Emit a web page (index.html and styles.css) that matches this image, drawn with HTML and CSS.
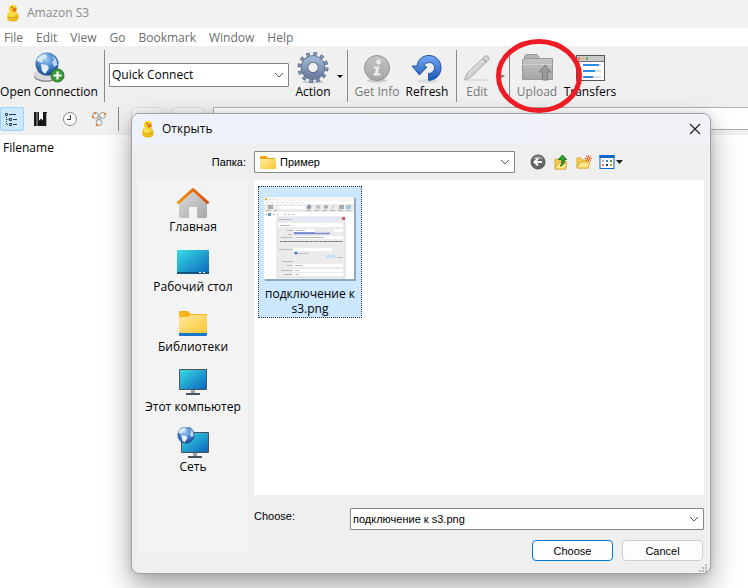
FILE: index.html
```html
<!DOCTYPE html>
<html lang="ru">
<head>
<meta charset="utf-8">
<title>Amazon S3</title>
<link rel="stylesheet" href="styles.css">
</head>
<body>
<svg class="defs" width="0" height="0" aria-hidden="true">
  <defs>
    <linearGradient id="screen" x1="0" y1="0" x2="1" y2="1"><stop offset="0" stop-color="#39dbe3"/><stop offset="1" stop-color="#0a66bd"/></linearGradient>
    <linearGradient id="folder-fill" x1="0" y1="0" x2="1" y2="1"><stop offset="0" stop-color="#ffe9a0"/><stop offset="1" stop-color="#fcc630"/></linearGradient>
    <radialGradient id="globe" cx=".45" cy=".3" r=".7"><stop offset="0" stop-color="#a8d0f4"/><stop offset=".5" stop-color="#4a88cf"/><stop offset="1" stop-color="#1d4690"/></radialGradient>
    <linearGradient id="steel" x1="0" y1="0" x2="0" y2="1"><stop offset="0" stop-color="#9db4d3"/><stop offset="1" stop-color="#6d7fa0"/></linearGradient>
    <linearGradient id="grey" x1="0" y1="0" x2="0" y2="1"><stop offset="0" stop-color="#c4c4c4"/><stop offset="1" stop-color="#a6a6a6"/></linearGradient>
    <linearGradient id="wall" x1="0" y1="0" x2="1" y2="1"><stop offset="0" stop-color="#dcdcdc"/><stop offset="1" stop-color="#a8a8a8"/></linearGradient>
    <linearGradient id="blue" x1="0" y1="0" x2="0" y2="1"><stop offset="0" stop-color="#72a9f5"/><stop offset="1" stop-color="#1d55b5"/></linearGradient>
    <linearGradient id="roof" x1="0" y1="0" x2="1" y2="0"><stop offset="0" stop-color="#f9900a"/><stop offset="1" stop-color="#dc4a0a"/></linearGradient>
    <radialGradient id="duckbody" cx=".4" cy=".3" r=".8"><stop offset="0" stop-color="#ffe95a"/><stop offset="1" stop-color="#e5a800"/></radialGradient>
    <symbol id="duck" viewBox="0 0 16 18">
      <path d="M2.500 8.500C4 8.500 5 9 6.500 7.500L11 8C13 9.500 14 11.500 13.500 14C13 16.500 11 17.500 8 17.500C4.500 17.500 2.300 16 2 13.500C1.800 11.500 3 10 2.500 8.500Z" fill="url(#duckbody)"/>
      <circle cx="8" cy="5" r="4.200" fill="#fbd327"/>
      <path d="M3 12.500C5 14.500 9 14.500 12.500 12" fill="none" stroke="#d99a00"/>
      <path d="M7 5L11 3.500L11.500 6.500L8.500 8Z" fill="#f06a1c"/><circle cx="7" cy="3.500" r=".7" fill="#553300"/>
    </symbol>
    <symbol id="chevron" viewBox="0 0 10 6"><path d="M1 1L5 5L9 1" fill="none" stroke="#555"/></symbol>
    <symbol id="monitor" viewBox="0 0 28 27">
      <rect x="0" y="0" width="28" height="21" rx="1" fill="#4b535c"/><rect x="1" y="1" width="26" height="19" fill="url(#screen)"/>
      <rect x="12" y="21" width="4" height="3" fill="#9ba2a8"/><rect x="7" y="24" width="14" height="2" fill="#4b535c"/>
    </symbol>
    <symbol id="earth" viewBox="0 0 24 24">
      <circle cx="12" cy="12" r="11.500" fill="url(#globe)"/>
      <path d="M2 7C5 3 8 2 11 2L12 5L8 8L7 11L2 9Z" fill="#d6e8f6"/><path d="M6 12L12 13L14 16L10 22L7 19Z" fill="#e4f0fa"/><path d="M17 4L21 7L22.500 13L19 15L17 10L19 8Z" fill="#bcd8ef"/>
    </symbol>
  </defs>
</svg>

<div class="window">
  <header class="titlebar">
    <svg width="16" height="18"><use href="#duck"/></svg>
    <span>Amazon S3</span>
  </header>

  <nav class="menu">
    <a href="#">File</a><a href="#">Edit</a><a href="#">View</a><a href="#">Go</a><a href="#">Bookmark</a><a href="#">Window</a><a href="#">Help</a>
  </nav>

  <div class="chrome">
    <div class="toolbar">
      <button class="tool tool-open">
        <svg width="32" height="32" viewBox="0 0 32 32"><ellipse cx="13" cy="24" rx="12" ry="6" fill="#888"/><ellipse cx="13" cy="22.500" rx="12" ry="6" fill="#d8d8d8"/><use href="#earth" x="2" y="0" width="24" height="24"/><circle cx="24.500" cy="23.500" r="6.500" fill="#3b9b36" stroke="#287527"/><path d="M24.500 19.500V27.500M20.500 23.500H28.500" stroke="#fff" stroke-width="2.200"/></svg>
        <span>Open Connection</span>
      </button>
      <i class="sep"></i>
      <div class="combo quick">
        <select aria-label="Quick Connect"><option>Quick Connect</option></select>
        <svg class="chev" width="10" height="6"><use href="#chevron"/></svg>
      </div>
      <button class="tool tool-action">
        <svg width="32" height="32" viewBox="0 0 32 32"><ellipse cx="16" cy="30" rx="11" ry="1.500" fill="#ccc"/><circle cx="16" cy="15.500" r="13" fill="none" stroke="#576783" stroke-width="5" stroke-dasharray="3.400 3.407"/><circle cx="16" cy="15.500" r="13" fill="none" stroke="#8397b6" stroke-width="3.600" stroke-dasharray="2.200 4.607" stroke-dashoffset="-.6"/><circle cx="16" cy="15.500" r="8.500" fill="none" stroke="#576783" stroke-width="7.500"/><circle cx="16" cy="15.500" r="8.500" fill="none" stroke="url(#steel)" stroke-width="6"/></svg>
        <span>Action</span>
      </button>
      <button class="drop" aria-label="Action menu"><svg width="6" height="3"><path d="M0 0H6L3 3Z" fill="#000"/></svg></button>
      <i class="sep"></i>
      <button class="tool tool-info off">
        <svg width="32" height="32" viewBox="0 0 32 32"><ellipse cx="16" cy="28.500" rx="10" ry="2" fill="#ccc"/><circle cx="16" cy="16" r="12.500" fill="url(#grey)" stroke="#929292"/><circle cx="17.500" cy="10" r="2.400" fill="#ededed"/><path d="M12.500 14.500H18.500L16.800 21.500H19.500V23.500H12.500V21.500H13.800L15 16.500H12.500Z" fill="#ededed"/></svg>
        <span>Get Info</span>
      </button>
      <button class="tool tool-refresh">
        <svg width="32" height="32" viewBox="0 0 32 32"><ellipse cx="17" cy="29" rx="11" ry="2" fill="#ddd"/><path d="M6 14C7 7 12 3.500 18 3.500C25 3.500 30 9 30 15.500C30 23 25 28 17.500 28.500V21.500C21 21.500 23.500 19 23.500 15.500C23.500 12.500 21 10.500 18.500 10.500C15.500 10.500 13.500 12 13 14.500L16 15L8.500 23L1 14Z" fill="url(#blue)" stroke="#2255a4"/></svg>
        <span>Refresh</span>
      </button>
      <i class="sep"></i>
      <button class="tool tool-edit off">
        <svg width="32" height="32" viewBox="0 0 32 32"><path d="M4 28H27" stroke="#ddd" stroke-width="2"/><path d="M3.500 28L6 21.500L24 4C26 3 28.500 5 28 7.500L9.500 25.500Z" fill="#d2d2d2" stroke="#a8a8a8"/><path d="M7.500 22L23.500 6.500" stroke="#ececec"/><path d="M21.500 6.500L25.500 10" stroke="#a8a8a8" stroke-width="1.500"/></svg>
        <span>Edit</span>
      </button>
      <button class="drop" aria-label="Edit menu"><svg width="6" height="3"><path d="M0 0H6L3 3Z" fill="#777"/></svg></button>
      <i class="sep"></i>
      <button class="tool tool-upload off">
        <svg width="32" height="32" viewBox="0 0 32 32"><path d="M3.500 8V4L5 2.500H16L18 5V8" fill="#b5b5b5" stroke="#999"/><path d="M3.500 6.500H31.500V27.500H1.500V7.500Z" fill="url(#grey)" stroke="#999"/><path d="M1.500 12.500H31" stroke="#d0d0d0"/><path d="M24 13L30 20H26.500V28H21.500V20H18Z" fill="#999" stroke="#828282"/></svg>
        <span>Upload</span>
      </button>
      <button class="tool tool-transfers">
        <svg width="32" height="32" viewBox="0 0 32 32"><rect x="2.500" y="3.500" width="28" height="25" fill="#fff" stroke="#555"/><path d="M3 4H30V9H3Z" fill="#c9c9c9"/><path d="M3 9.500H30" stroke="#777"/><path d="M4 5.500H6V7.500H4Z" fill="#e35b3c"/><path d="M8 5.500H10V7.500H8Z" fill="#f1b02c"/><path d="M12 5.500H14V7.500H12Z" fill="#39a854"/><path d="M9 13H27M9 19H27M9 25H27" stroke="#ddd" stroke-width="2"/><path d="M9 13H25M9 19H21M9 25H19" stroke="#2f8be0" stroke-width="2"/></svg>
        <span>Transfers</span>
      </button>
    </div>

    <div class="viewbar">
      <button class="view on" aria-label="Browser"><svg width="16" height="16" viewBox="0 0 16 16"><path d="M1.500 2.500H3.500V4.500H1.500ZM5.500 7.500H7.500V9.500H5.500ZM5.500 12.500H7.500V14.500H5.500Z" fill="none" stroke="#2c3c48"/><path d="M5 3.500H12M9 8.500H13M9 13.500H13" stroke="#2c3c48"/><path d="M2.500 6V13.500H5M2.500 8.500H5" fill="none" stroke="#2c3c48" stroke-dasharray="1 1"/></svg></button>
      <button class="view" aria-label="Bookmarks"><svg width="16" height="16" viewBox="0 0 16 16"><rect x="1" y="1" width="13" height="14" fill="#181818"/><path d="M4 1V15" stroke="#aaa"/><path d="M6 1H10V9.500L8 7.500L6 9.500Z" fill="#fff"/><path d="M13.500 2V15" stroke="#aaa"/></svg></button>
      <button class="view" aria-label="History"><svg width="16" height="16" viewBox="0 0 16 16"><circle cx="8" cy="8" r="6.500" fill="#fff" stroke="#888"/><path d="M8.500 4V8.500H5" fill="none" stroke="#333"/></svg></button>
      <button class="view" aria-label="Bonjour"><svg width="16" height="16" viewBox="0 0 16 16"><g fill="#eee" stroke="#9a9a9a"><circle cx="4.500" cy="4.500" r="3"/><circle cx="11.500" cy="4.500" r="3"/><circle cx="8" cy="11.500" r="3"/><circle cx="8" cy="7" r="1.500"/></g><g fill="#ed7a35"><circle cx="2" cy="6" r="1.200"/><circle cx="4" cy="2" r="1.200"/><circle cx="14" cy="3" r="1.200"/><circle cx="6" cy="14" r="1.200"/></g></svg></button>
      <i class="vsep"></i>
      <button class="nav" aria-label="Back"></button>
      <button class="nav" aria-label="Forward"></button>
      <input class="path" type="text" aria-label="Path">
    </div>
  </div>

  <main class="listing"><span>Filename</span></main>
</div>

<section class="dialog" role="dialog" aria-labelledby="dlg-title">
  <header class="dlg-title">
    <svg width="16" height="18"><use href="#duck"/></svg>
    <span id="dlg-title">Открыть</span>
    <button class="close" aria-label="Close"><svg width="12" height="12" viewBox="0 0 12 12"><path d="M1 1L11 11M11 1L1 11" stroke="#222" stroke-width="1.200"/></svg></button>
  </header>

  <div class="dlg-body">
    <label class="folder-label" for="folder">Папка:</label>
    <div class="folder-row">
      <div class="combo folder">
        <svg class="lead" width="16" height="14" viewBox="0 0 16 14"><path d="M0 2Q0 1 1 1H6L8 3H15V6H0Z" fill="#eda50b"/><rect x="0" y="4" width="16" height="10" rx="1" fill="url(#folder-fill)"/></svg>
        <select id="folder"><option>Пример</option></select>
        <svg class="chev" width="10" height="6"><use href="#chevron"/></svg>
      </div>
      <div class="folder-tools">
        <button aria-label="Back"><svg width="16" height="16" viewBox="0 0 16 16"><circle cx="8" cy="8" r="7" fill="#666" stroke="#555"/><path d="M3 5A6 6 0 0 1 13 5Z" fill="#aaa"/><path d="M12 8H5M8 4.500L4.500 8L8 11.500" fill="none" stroke="#fff" stroke-width="2"/></svg></button>
        <button aria-label="Up"><svg width="16" height="16" viewBox="0 0 16 16"><path d="M2 5H6L7 7H13V15H2Z" fill="#f1cf55" stroke="#d9ae3a"/><path d="M2 15L5 9H14L12 15Z" fill="#ffe88c" stroke="#d9ae3a"/><path d="M7 12Q10 10 8.500 5.500H5.500L9.500 1L13.500 5.500H11.500Q12 11 7 12Z" fill="#32a12d" stroke="#197319"/></svg></button>
        <button aria-label="New folder"><svg width="16" height="16" viewBox="0 0 16 16"><path d="M1 4H5L6 6H12V14H1Z" fill="#f1cf55" stroke="#d9ae3a"/><path d="M1 14L4 8H14L12 14Z" fill="#ffe88c" stroke="#d9ae3a"/><path d="M12.500 1V8M9 4.500H16M10 2L15 7M15 2L10 7" stroke="#f0562b"/><circle cx="12.500" cy="4.500" r="1" fill="#ffe88c"/></svg></button>
        <button class="views" aria-label="Views"><svg width="24" height="16" viewBox="0 0 24 16"><rect x="1" y="1.500" width="14" height="13" fill="#fff" stroke="#0b65cb"/><path d="M.5 1H15.500V4H.5Z" fill="#0b65cb"/><path d="M3 6H5V8H3Z" fill="#b8a5c8"/><path d="M7 6H9V8H7Z" fill="#3b7ed0"/><path d="M11 6H13V8H11Z" fill="#46a046"/><path d="M3 10H5V12H3Z" fill="#e87942"/><path d="M7 10H9V12H7Z" fill="#123d8a"/><path d="M11 10H13V12H11Z" fill="#c99d2e"/><path d="M17 6H24L20.500 10Z" fill="#222"/></svg></button>
      </div>
    </div>

    <aside class="places">
      <button><svg width="32" height="32" viewBox="0 0 32 32"><path d="M2 15L16 4L30 15V29Q30 31 28 31H20V20H12V31H4Q2 31 2 29Z" fill="url(#wall)"/><path d="M1.500 15.500L16 2.500L30.500 15.500" fill="none" stroke="url(#roof)" stroke-width="3" stroke-linejoin="round" stroke-linecap="round"/></svg><span>Главная</span></button>
      <button><svg width="32" height="32" viewBox="0 0 32 32"><rect x="0" y="3" width="32" height="24" rx="1" fill="url(#screen)"/><path d="M0 25H32V26Q32 27 31 27H1Q0 27 0 26Z" fill="#12567d"/><path d="M22 25H24V26H22ZM26 25H28V26H26Z" fill="#fff"/></svg><span>Рабочий стол</span></button>
      <button><svg width="32" height="32" viewBox="0 0 32 32"><path d="M2 5Q2 4 3 4H11L14 7H30V14H2Z" fill="#f7b51b"/><path d="M2 26H30V28Q30 29 29 29H3Q2 29 2 28Z" fill="#1678cd"/><path d="M2 10H11L14 8H29Q30 8 30 9V26H2Z" fill="url(#folder-fill)"/></svg><span>Библиотеки</span></button>
      <button><svg width="32" height="32" viewBox="0 0 32 32"><use href="#monitor" x="2" y="2" width="28" height="27"/></svg><span>Этот компьютер</span></button>
      <button><svg width="32" height="32" viewBox="0 0 32 32"><use href="#monitor" x="4" y="5" width="28" height="27"/><use href="#earth" x="0" y="-1" width="18" height="18"/></svg><span>Сеть</span></button>
    </aside>

    <div class="pane">
      <div class="files">
        <button class="file">
          <svg width="92" height="84" viewBox="0 0 92 84">
            <rect x="1" y="1" width="91" height="83" fill="#8fa9bd"/><rect x="0" y="0" width="90" height="82" fill="#fff"/>
            <rect x="0" y="0" width="90" height="4" fill="#f5f5f5"/><rect x="1" y="1" width="2" height="2" fill="#f0b400"/><path d="M4 2.500H12M2 5.500H40" stroke="#ddd" stroke-dasharray="3 2"/>
            <rect x="0" y="7" width="90" height="8" fill="#ececec"/>
            <rect x="4" y="8" width="5" height="4" fill="#aaa"/><path d="M2 13.500H13M42 13.500H88" stroke="#b5b5b5" stroke-dasharray="5 3"/><rect x="15" y="9" width="26" height="3" fill="#fff"/>
            <circle cx="45" cy="10" r="2.300" fill="#8592a8"/><circle cx="54" cy="10" r="2" fill="#bbb"/><circle cx="62" cy="10" r="2" fill="#aaa"/><path d="M67 12L71 8" stroke="#bbb"/><rect x="75" y="8" width="5" height="4" fill="#aaa"/><rect x="82" y="8" width="5" height="4" fill="#a5c4df"/>
            <path d="M1 17.500H14M20 17.500H30" stroke="#bbb" stroke-dasharray="2 2"/><rect x="4" y="16" width="3" height="3" fill="#579cc9"/>
            <rect x="13" y="20" width="68" height="61" fill="#ebebeb" stroke="#ddd"/><rect x="13" y="20" width="68" height="4" fill="#e4e8f4"/><path d="M15 22.500H27" stroke="#bbb"/><rect x="78" y="20" width="3" height="3" fill="#d65b68"/>
            <g fill="#fff"><rect x="14" y="26" width="65" height="4"/><rect x="30" y="32" width="21" height="3"/><rect x="70" y="32" width="9" height="3"/><rect x="30" y="39" width="49" height="3"/><rect x="30" y="51" width="38" height="3"/><rect x="29" y="67" width="50" height="3"/><rect x="29" y="72" width="50" height="3"/><rect x="29" y="76" width="50" height="3"/></g>
            <path d="M16 28.500H26M23 33.500H29M31 33.500H41M24 37.500H28M17 40.500H28M31 40.500H60M15 52.500H28M34 56.500H45M18 64.500H29M23 68.500H28M31 68.500H39M17 73.500H28M31 73.500H35M20 77.500H28M31 77.500H35" stroke="#bbb"/><path d="M30 35.500H51" stroke="#74a5d8"/><path d="M30 36.500H66" stroke="#8585d8" stroke-width="1.500"/><path d="M16 44.500H79" stroke="#777" stroke-dasharray="2 .5"/><circle cx="32" cy="56" r="1.500" fill="#2f78c8"/><rect x="62" y="58" width="9" height="3" fill="#c5ddf2"/><path d="M73 60.500H78" stroke="#bbb"/>
          </svg>
          <span>подключение к s3.png</span>
        </button>
      </div>

      <div class="name-row">
        <label for="fname">Choose:</label>
        <div class="combo name">
          <input id="fname" type="text" value="подключение к s3.png">
          <svg class="chev" width="10" height="6"><use href="#chevron"/></svg>
        </div>
      </div>
      <div class="actions">
        <button class="btn primary">Choose</button>
        <button class="btn">Cancel</button>
      </div>
    </div>
  </div>
  <svg class="grip" width="8" height="8" viewBox="0 0 8 8"><path d="M6 0H8V2H6ZM3 3H5V5H3ZM6 3H8V5H6ZM0 6H2V8H0ZM3 6H5V8H3ZM6 6H8V8H6Z" fill="#b9b9b9"/></svg>
</section>

<svg class="marker" width="88" height="76" viewBox="0 0 88 76" aria-hidden="true"><ellipse cx="44" cy="38" rx="40.500" ry="34.500" fill="none" stroke="#ed1c24" stroke-width="5"/></svg>
</body>
</html>
```
FILE: styles.css
```css
* { box-sizing: border-box; }

body {
  margin: 0;
  min-height: 100vh;
  position: relative;
  overflow: hidden;
  background: #fff;
  color: #000;
  font: 12px/16px "Open Sans", "Noto Sans", sans-serif;
}

button, input, select {
  margin: 0;
  padding: 0;
  border: 0;
  background: none;
  color: inherit;
  font: inherit;
  appearance: none;
}

svg { display: block; flex: none; }
.defs { position: absolute; }

.window {
  display: flex;
  flex-direction: column;
  min-height: 100vh;
}

.titlebar {
  display: flex;
  align-items: center;
  gap: 6px;
  height: 28px;
  padding: 0 5px 2px;
  background: #f2f2f2;
  color: #8c8c8c;
}

.menu {
  display: flex;
  gap: 13px;
  height: 18px;
  padding: 2px 4px 0;
}
.menu a { color: #6d6d6d; text-decoration: none; }

.chrome { background: #f0f0f0; }

.toolbar {
  display: flex;
  height: 61px;
  padding-top: 4px;
}
.tool {
  display: flex;
  flex-direction: column;
  align-items: center;
  height: 52px;
  padding-top: 2px;
  white-space: nowrap;
}
.tool.off { color: #777; }
.tool-open { width: 98px; margin-right: 2px; }
.tool-action { width: 48px; }
.tool-info { width: 50px; }
.tool-refresh { width: 50px; }
.tool-edit { width: 32px; margin-right: 6px; }
.tool-upload { width: 46px; }
.tool-transfers { width: 60px; }
.drop { display: flex; align-items: center; width: 6px; height: 52px; }
.sep { width: 1px; height: 52px; margin: 0 4px; background: #888; }

.combo {
  display: flex;
  align-items: center;
  height: 22px;
  padding: 0 4px 0 2px;
  background: #fff;
  border: 1px solid #868686;
  border-radius: 1px;
}
.combo select, .combo input { flex: 1; min-width: 0; height: 20px; outline: 0; }
.chev { pointer-events: none; }
.quick { width: 180px; height: 24px; margin-top: 13px; }

.viewbar {
  display: flex;
  align-items: flex-start;
  height: 28px;
}
.view {
  display: flex;
  align-items: center;
  justify-content: center;
  width: 24px;
  height: 24px;
  margin-right: 5px;
  border: 1px solid transparent;
  border-radius: 2px;
}
.view.on { background: #cce8ff; border-color: #99d1ff; }
.vsep { width: 1px; height: 24px; margin: 0 12px 0 2px; background: #888; }
.nav {
  width: 32px;
  height: 24px;
  margin-right: 9px;
  background: #f6f6f6;
  border: 1px solid #ddd;
  border-radius: 4px;
}
.path {
  flex: 1;
  min-width: 0;
  height: 23px;
  background: #fff;
  border: 1px solid #b0b0b0;
  border-right: 0;
}

.listing { flex: 1; padding: 5px 3px; }

.dialog {
  position: absolute;
  inset: 113px 37px 14px 131px;
  display: flex;
  flex-direction: column;
  background: #efefef;
  border: 1px solid #a2a2a2;
  border-radius: 8px;
  box-shadow: 0 12px 28px rgba(0, 0, 0, .36), 0 0 6px rgba(0, 0, 0, .12);
  font: 11px/14px "Liberation Sans", sans-serif;
}
.dlg-title {
  display: flex;
  align-items: center;
  gap: 6px;
  height: 30px;
  padding: 0 9px 0 8px;
  background: linear-gradient(90deg, #eef2fc, #f1f2f7);
  border-radius: 7px 7px 0 0;
  font: 12px/16px "Open Sans", sans-serif;
}
.close { margin-left: auto; }

.dlg-body {
  flex: 1;
  display: grid;
  grid-template-columns: 110px 1fr;
  grid-template-rows: 22px 1fr;
  gap: 7px 6px;
  padding: 7px 6px 12px;
  min-height: 0;
}
.folder-label {
  align-self: center;
  padding-right: 2px;
  text-align: right;
}
.folder-row { display: flex; }
.folder { flex: 1; gap: 4px; padding-left: 5px; }
.folder-tools { display: flex; align-items: center; gap: 7px; width: 189px; padding-left: 15px; }

.places {
  display: flex;
  flex-direction: column;
  margin-bottom: 8px;
  background: #f3f3f3;
  font: 12px/16px "Open Sans", sans-serif;
}
.places button {
  display: flex;
  flex-direction: column;
  align-items: center;
  height: 60px;
  padding-top: 7px;
  white-space: nowrap;
}

.pane { display: flex; flex-direction: column; min-width: 0; }
.files { flex: 1; padding: 6px 4px; background: #fff; }
.file {
  display: flex;
  flex-direction: column;
  align-items: center;
  gap: 5px;
  width: 104px;
  height: 132px;
  padding: 10px 4px 0;
  background: #cce8ff;
  border: 1px dotted #333;
  font: 12px/15px "Open Sans", sans-serif;
}
.name-row { display: flex; margin-top: 13px; }
.name-row label { width: 96px; padding-top: 1px; }
.name { flex: 1; }
.actions {
  display: flex;
  justify-content: flex-end;
  gap: 9px;
  margin-top: 10px;
  padding-right: 1px;
}
.btn {
  width: 81px;
  height: 21px;
  background: #fdfdfd;
  border: 1px solid #d0d0d0;
  border-radius: 4px;
}
.primary { border-color: #0078d4; }
.grip { position: absolute; right: 3px; bottom: 1px; }

.marker { position: absolute; left: 495px; top: 38px; pointer-events: none; }
```
